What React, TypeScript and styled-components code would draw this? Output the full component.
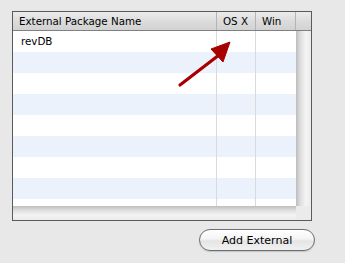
import React from 'react';
import styled, { createGlobalStyle } from 'styled-components';

const GlobalStyle = createGlobalStyle`
    html, body {
        margin: 0;
        padding: 0;
        background: #e8e8e8;
    }
    body {
        font-family: "Lucida Grande", "DejaVu Sans", sans-serif;
        font-size: 10.3px;
        color: #000;
    }
`;

interface IColumn {
    title: string,
    width: number,
}

const columns: IColumn[] = [
    { title: 'External Package Name', width: 204 },
    { title: 'OS X', width: 39 },
    { title: 'Win', width: 40 },
];

const packages: string[][] = [
    ['revDB', '', ''],
];

const ROW_COUNT = 9;

export default function App() {
    const rows = Array.from({ length: ROW_COUNT }, (_, i) => packages[i] || ['', '', '']);

    return (
        <>
            <GlobalStyle />
            <StyledPage>
                <Wrapper>
                    <Panel>
                        <Header>
                            {columns.map((c) => (
                                <HeaderCell key={c.title} $width={c.width}>{c.title}</HeaderCell>
                            ))}
                            <HeaderFiller />
                        </Header>
                        <Body>
                            <Rows>
                                {rows.map((r, i) => (
                                    <Row key={i} $odd={i % 2 === 1}>
                                        {columns.map((c, j) => (
                                            <Cell key={c.title} $width={c.width} $last={j === columns.length - 1}>{r[j]}</Cell>
                                        ))}
                                    </Row>
                                ))}
                            </Rows>
                            <VScroll />
                        </Body>
                        <Footer>
                            <HScroll />
                            <Corner />
                        </Footer>
                        <Arrow width="60" height="50" viewBox="0 0 60 50">
                            <line x1="4" y1="44" x2="43" y2="14" stroke="#a80000" strokeWidth="3.2" strokeLinecap="round" />
                            <polygon points="54,1 35,8 47,21" fill="#a80000" stroke="#a80000" strokeWidth="1" strokeLinejoin="round" />
                        </Arrow>
                    </Panel>
                    <Button>Add External</Button>
                </Wrapper>
            </StyledPage>
        </>
    );
}

const StyledPage = styled.div`
    width: 345px;
    height: 263px;
    padding: 11px 0 0 12px;
    box-sizing: border-box;
`;

const Wrapper = styled.div`
    width: 303px;
    display: flex;
    flex-direction: column;
    align-items: flex-end;
    gap: 8px;
`;

const Panel = styled.div`
    position: relative;
    align-self: flex-start;
    width: 300px;
    height: 210px;
    box-sizing: border-box;
    border: 1px solid #5a5a5a;
    display: flex;
    flex-direction: column;
    background: #fff;
`;

const Header = styled.div`
    display: flex;
    height: 19px;
    box-sizing: border-box;
    border-bottom: 1px solid #808080;
    background: linear-gradient(#ececec, #dcdcdc 50%, #d2d2d2);
`;

const HeaderCell = styled.div<{ $width: number }>`
    width: ${(p) => p.$width}px;
    box-sizing: border-box;
    border-right: 1px solid #b4b4b4;
    padding-left: 6px;
    line-height: 18px;
    white-space: nowrap;
    overflow: hidden;
`;

const HeaderFiller = styled.div`
    flex: 1;
`;

const Body = styled.div`
    flex: 1;
    display: flex;
    overflow: hidden;
`;

const Rows = styled.div`
    width: 283px;
    display: flex;
    flex-direction: column;
    overflow: hidden;
`;

const Row = styled.div<{ $odd: boolean }>`
    display: flex;
    flex: 0 0 21px;
    height: 21px;
    background: ${(p) => (p.$odd ? '#ecf2fb' : '#ffffff')};
`;

const Cell = styled.div<{ $width: number, $last: boolean }>`
    width: ${(p) => p.$width}px;
    box-sizing: border-box;
    border-right: ${(p) => (p.$last ? 'none' : '1px solid #dadada')};
    padding-left: 8px;
    line-height: 21px;
    white-space: nowrap;
`;

const VScroll = styled.div`
    flex: 1;
    background: linear-gradient(90deg, #bdbdbd, #dedede 30%, #f4f4f4 65%, #ebebeb);
`;

const Footer = styled.div`
    display: flex;
    height: 14px;
`;

const HScroll = styled.div`
    width: 283px;
    background: linear-gradient(#bdbdbd, #dedede 30%, #f4f4f4 65%, #ebebeb);
`;

const Corner = styled.div`
    flex: 1;
    background: #ebebeb;
`;

const Arrow = styled.svg`
    position: absolute;
    left: 163px;
    top: 29px;
`;

const Button = styled.button`
    width: 116px;
    height: 22px;
    box-sizing: border-box;
    border: 1px solid #6e6e6e;
    border-radius: 11px;
    background: linear-gradient(#ffffff, #f4f4f4 45%, #e4e4e4 55%, #f2f2f2);
    font-family: "Lucida Grande", "DejaVu Sans", sans-serif;
    font-size: 11px;
    color: #000;
    padding: 0;
    box-shadow: 0 1px 1px rgba(0, 0, 0, 0.15);
`;
